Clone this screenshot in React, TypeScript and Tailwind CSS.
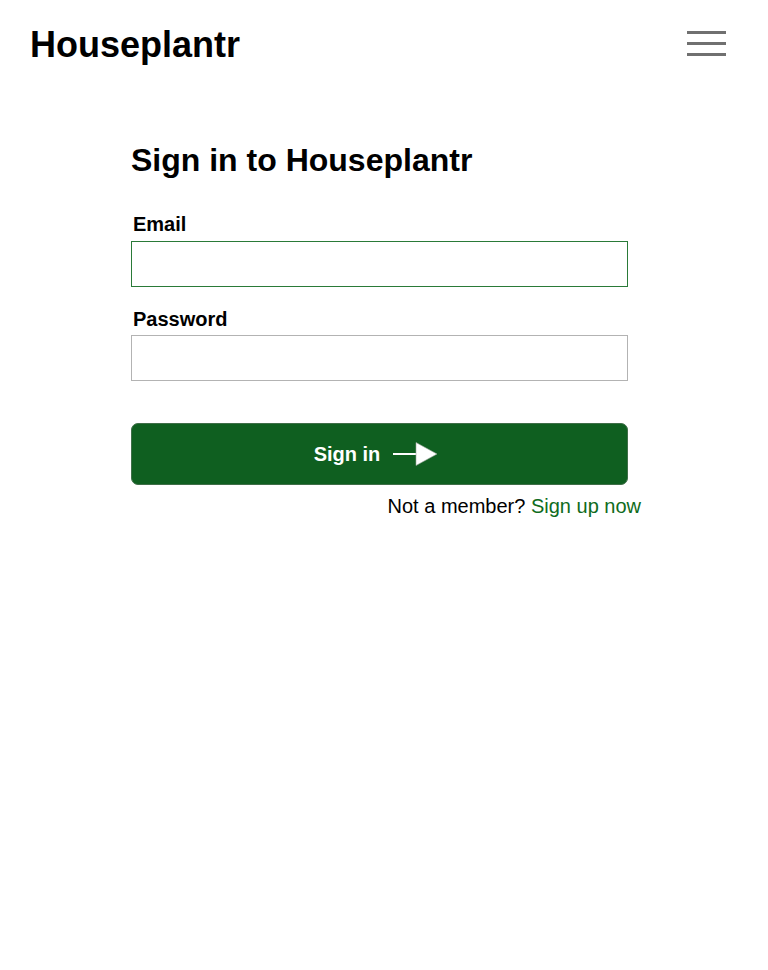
export default function App() {
  return (
    <div className="min-h-[970px] w-full bg-white text-black" style={{ fontFamily: '"Liberation Sans", Arial, sans-serif' }}>
      <header className="flex h-[90px] items-center justify-between pl-[30px] pr-[42px]">
        <h1 className="text-[36px] font-bold leading-[normal]">Houseplantr</h1>
        <button aria-label="Menu" className="-mt-[3px] flex w-[39px] flex-col gap-[8px]">
          <span className="block h-[3px] w-full bg-[#707070]" />
          <span className="block h-[3px] w-full bg-[#707070]" />
          <span className="block h-[3px] w-full bg-[#707070]" />
        </button>
      </header>

      <main className="ml-[131px] w-[510px] pt-[52px]">
        <h2 className="text-[32px] font-bold leading-[normal]">Sign in to Houseplantr</h2>

        <form className="mt-[34px] flex flex-col" onSubmit={(e) => e.preventDefault()}>
          <label htmlFor="email" className="pl-[2px] text-[20px] font-bold leading-[normal]">Email</label>
          <input
            id="email"
            type="email"
            className="mt-[5px] h-[46px] w-[497px] border border-[#2a7a38] bg-white px-2 text-[18px] outline-none"
          />

          <label htmlFor="password" className="mt-[21px] pl-[2px] text-[20px] font-bold leading-[normal]">Password</label>
          <input
            id="password"
            type="password"
            className="mt-[4px] h-[46px] w-[497px] border border-[#b3b3b3] bg-white px-2 text-[18px] outline-none"
          />

          <button
            type="submit"
            className="mt-[42px] flex h-[62px] w-[497px] items-center justify-center gap-[13px] rounded-[7px] border border-[#3f6e48] bg-[#0f5f20] pr-[7px] text-[20px] font-bold text-white"
          >
            <span>Sign in</span>
            <svg width="45" height="26" viewBox="0 0 45 26" className="block">
              <rect x="0" y="12" width="24" height="2" fill="#fff" />
              <path d="M23 1.5 L44 13 L23 24.5 Z" fill="#fff" stroke="#9aa59c" strokeWidth="0.6" />
            </svg>
          </button>
        </form>

        <p className="mt-[10px] text-right text-[20px] leading-[normal]">
          Not a member? <a href="#" className="text-[#0f6b20]">Sign up now</a>
        </p>
      </main>
    </div>
  );
}
